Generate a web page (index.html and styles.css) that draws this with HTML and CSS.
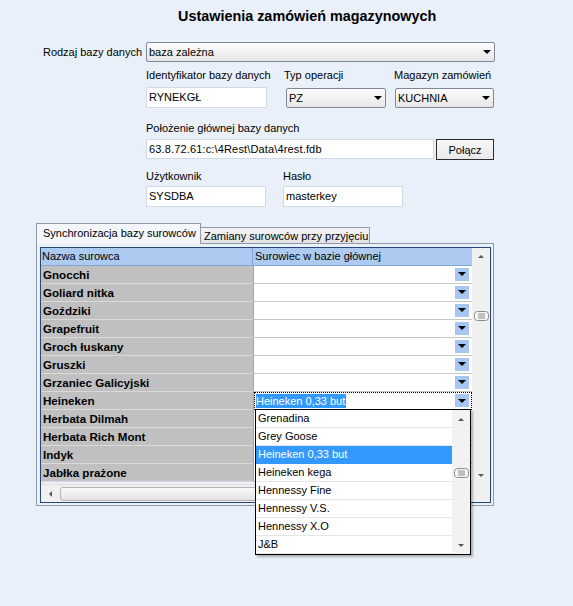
FILE: index.html
```html
<!DOCTYPE html>
<html lang="pl">
<head>
<meta charset="utf-8">
<title>Ustawienia zamówień magazynowych</title>
<link rel="stylesheet" href="styles.css">
</head>
<body>
<main class="page">
  <h1 class="title">Ustawienia zamówień magazynowych</h1>

  <div class="db-row">
    <span class="side-label">Rodzaj bazy danych</span>
    <div class="combo combo-db"><span class="combo-text">baza zależna</span><span class="combo-arrow"></span></div>
  </div>

  <div class="form">
    <div class="form-row row-ident">
      <div class="field f-ident"><label>Identyfikator bazy danych</label><div class="edit edit-short">RYNEKGŁ</div></div>
      <div class="field f-typ"><label>Typ operacji</label><div class="combo combo-typ"><span class="combo-text">PZ</span><span class="combo-arrow"></span></div></div>
      <div class="field f-mag"><label>Magazyn zamówień</label><div class="combo combo-mag"><span class="combo-text">KUCHNIA</span><span class="combo-arrow"></span></div></div>
    </div>
    <div class="form-row row-path">
      <div class="field f-path"><label>Położenie głównej bazy danych</label>
        <div class="path-line"><div class="edit edit-path">63.8.72.61:c:\4Rest\Data\4rest.fdb</div><button class="btn" type="button">Połącz</button></div>
      </div>
    </div>
    <div class="form-row row-user">
      <div class="field f-user"><label>Użytkownik</label><div class="edit edit-user">SYSDBA</div></div>
      <div class="field f-pass"><label>Hasło</label><div class="edit edit-user">masterkey</div></div>
    </div>
  </div>

  <section class="tabs">
    <div class="tab-strip">
      <div class="tab tab-active">Synchronizacja bazy surowców</div>
      <div class="tab tab-inactive">Zamiany surowców przy przyjęciu</div>
    </div>
    <div class="tab-panel">
      <div class="grid">
        <div class="table">
          <div class="thead"><div class="th th-name">Nazwa surowca</div><div class="th th-main">Surowiec w bazie głównej</div></div>
          <div class="tr"><div class="td name">Gnocchi</div><div class="td val"><span class="cell-btn"></span></div></div>
          <div class="tr"><div class="td name">Goliard nitka</div><div class="td val"><span class="cell-btn"></span></div></div>
          <div class="tr"><div class="td name">Goździki</div><div class="td val"><span class="cell-btn"></span></div></div>
          <div class="tr"><div class="td name">Grapefruit</div><div class="td val"><span class="cell-btn"></span></div></div>
          <div class="tr"><div class="td name">Groch łuskany</div><div class="td val"><span class="cell-btn"></span></div></div>
          <div class="tr"><div class="td name">Gruszki</div><div class="td val"><span class="cell-btn"></span></div></div>
          <div class="tr"><div class="td name">Grzaniec Galicyjski</div><div class="td val"><span class="cell-btn"></span></div></div>
          <div class="tr"><div class="td name">Heineken</div><div class="td val val-edit"><span class="sel-text">Heineken 0,33 but</span><span class="cell-btn"></span></div></div>
          <div class="tr"><div class="td name">Herbata Dilmah</div><div class="td val"></div></div>
          <div class="tr"><div class="td name">Herbata Rich Mont</div><div class="td val"></div></div>
          <div class="tr"><div class="td name">Indyk</div><div class="td val"></div></div>
          <div class="tr"><div class="td name">Jabłka prażone</div><div class="td val"></div></div>
        </div>
        <div class="vscroll">
          <div class="sb-btn"><span class="arr-up"></span></div>
          <div class="grip-wrap grip-main"><svg class="grip" width="15" height="10" viewBox="0 0 15 10"><rect x="0.5" y="0.5" width="14" height="9" rx="3" fill="#F6F6F6" stroke="#8C8C8C"/><line x1="4" y1="3" x2="11" y2="3" stroke="#8C8C8C"/><line x1="4" y1="5" x2="11" y2="5" stroke="#8C8C8C"/><line x1="4" y1="7" x2="11" y2="7" stroke="#8C8C8C"/></svg></div>
          <div class="sb-btn sb-bottom"><span class="arr-down"></span></div>
        </div>
        <div class="hscroll">
          <div class="sb-btn-h"><span class="arr-left"></span></div>
          <div class="hthumb"></div>
        </div>
        <div class="corner"></div>

        <div class="dropdown">
          <ul class="dd-list">
            <li>Grenadina</li>
            <li>Grey Goose</li>
            <li class="dd-sel">Heineken 0,33 but</li>
            <li>Heineken kega</li>
            <li>Hennessy Fine</li>
            <li>Hennessy V.S.</li>
            <li>Hennessy X.O</li>
            <li>J&amp;B</li>
          </ul>
          <div class="dd-scroll">
            <div class="sb-btn"><span class="arr-up"></span></div>
            <div class="grip-wrap grip-dd"><svg class="grip" width="15" height="10" viewBox="0 0 15 10"><rect x="0.5" y="0.5" width="14" height="9" rx="3" fill="#F6F6F6" stroke="#8C8C8C"/><line x1="4" y1="3" x2="11" y2="3" stroke="#8C8C8C"/><line x1="4" y1="5" x2="11" y2="5" stroke="#8C8C8C"/><line x1="4" y1="7" x2="11" y2="7" stroke="#8C8C8C"/></svg></div>
            <div class="sb-btn sb-bottom"><span class="arr-down"></span></div>
          </div>
        </div>
      </div>
    </div>
  </section>
</main>
</body>
</html>
```

FILE: styles.css
```css
html, body {
  margin: 0;
  padding: 0;
}
body {
  background: #E9F0F9;
  font-family: "Liberation Sans", Arial, sans-serif;
  font-size: 11px;
  color: #000;
}
.page {
  position: relative;
  width: 573px;
  height: 606px;
  padding-top: 8px;
  box-sizing: border-box;
  overflow: hidden;
}
.title {
  margin: 0 0 0 178px;
  font-size: 14.4px;
  font-weight: bold;
  line-height: 17px;
  height: 17px;
  white-space: nowrap;
}

/* ---------- combos / edits ---------- */
.combo {
  display: flex;
  align-items: center;
  height: 20px;
  box-sizing: border-box;
  border: 1px solid #7D8899;
  border-radius: 2px;
  background: linear-gradient(#FDFDFD, #E6E6E6);
  padding-left: 2px;
}
.combo-text {
  line-height: 16px;
  white-space: nowrap;
}
.combo-arrow {
  margin-left: auto;
  margin-right: 3px;
  width: 0;
  height: 0;
  border-left: 4px solid transparent;
  border-right: 4px solid transparent;
  border-top: 4px solid #000;
}
.edit {
  height: 21px;
  box-sizing: border-box;
  background: #FFF;
  border: 1px solid #D2DAE6;
  padding-left: 2px;
  line-height: 19px;
  white-space: nowrap;
}

.db-row {
  display: flex;
  align-items: center;
  margin-top: 17px;
  height: 20px;
}
.side-label {
  width: 146px;
  box-sizing: border-box;
  padding-right: 4px;
  text-align: right;
  white-space: nowrap;
}
.combo-db {
  width: 349px;
}

.form {
  margin-left: 146px;
}
.form-row {
  display: flex;
}
.field label {
  display: block;
  height: 14px;
  line-height: 14px;
  white-space: nowrap;
}
.row-ident {
  margin-top: 6px;
}
.f-ident {
  width: 120px;
}
.f-ident .edit {
  margin-top: 5px;
}
.edit-short {
  width: 121px;
}
.f-typ {
  width: 102px;
  margin-left: 18px;
}
.combo-typ {
  width: 100px;
  margin-left: 2px;
  margin-top: 6px;
}
.f-mag {
  margin-left: 8px;
}
.combo-mag {
  width: 99px;
  margin-left: 1px;
  margin-top: 6px;
}
.row-path {
  margin-top: 13px;
}
.path-line {
  display: flex;
  margin-top: 4px;
}
.edit-path {
  width: 288px;
  height: 20px;
  line-height: 18px;
  letter-spacing: 0.15px;
}
.btn {
  margin: 0 0 0 2px;
  width: 58px;
  height: 21px;
  box-sizing: border-box;
  border: 1px solid #2D2D2D;
  border-radius: 0;
  background: linear-gradient(#F7F7F7, #E9E9E9);
  font-family: inherit;
  font-size: 11px;
  color: #000;
  padding: 0;
}
.row-user {
  margin-top: 9px;
}
.row-user .edit {
  margin-top: 3px;
}
.f-user {
  width: 120px;
}
.edit-user {
  width: 120px;
}
.f-pass {
  margin-left: 17px;
}

/* ---------- tabs ---------- */
.tabs {
  margin-top: 16px;
  margin-left: 36px;
}
.tab-strip {
  display: flex;
  align-items: flex-end;
  height: 20px;
  position: relative;
  z-index: 2;
}
.tab {
  box-sizing: border-box;
  border: 1px solid #8F9AAA;
  border-bottom: none;
  white-space: nowrap;
}
.tab-active {
  width: 165px;
  height: 21px;
  margin-bottom: -1px;
  background: #F3F6FA;
  padding-left: 6px;
  line-height: 19px;
}
.tab-inactive {
  width: 169px;
  height: 16px;
  background: linear-gradient(#F4F4F4, #E4E4E4);
  border-left: none;
  padding-left: 3px;
  line-height: 16px;
}
.tab-panel {
  width: 458px;
  height: 263px;
  box-sizing: border-box;
  border: 1px solid #8F9AAA;
  padding: 3px 2px 2px 3px;
  background: #E9F0F9;
}

/* ---------- grid ---------- */
.grid {
  position: relative;
  width: 451px;
  height: 256px;
  box-sizing: border-box;
  border: 1px solid #264778;
  display: grid;
  grid-template-columns: 431px 18px;
  grid-template-rows: 236px 18px;
  background: #F0F0F0;
}
.table {
  overflow: hidden;
  background: #E9F0F9;
}
.thead {
  display: flex;
  height: 18px;
  box-sizing: border-box;
  background: #ADCBF1;
  border-bottom: 1px solid #86A6D2;
}
.th {
  line-height: 17px;
  white-space: nowrap;
}
.th-name {
  width: 213px;
  box-sizing: border-box;
  border-right: 1px solid #86A6D2;
  padding-left: 1px;
}
.th-main {
  width: 218px;
  padding-left: 2px;
}
.tr {
  display: flex;
  height: 18px;
}
.td {
  height: 18px;
  box-sizing: border-box;
  white-space: nowrap;
}
.name {
  width: 213px;
  background: #C0C0C0;
  border-right: 1px solid #A4A4A4;
  border-bottom: 1px solid #D9D9D9;
  padding-left: 2px;
  font-weight: bold;
  font-size: 11.6px;
  line-height: 18px;
}
.val {
  width: 218px;
  background: #FFF;
  border-bottom: 1px solid #C6C6C6;
  display: flex;
  align-items: center;
  justify-content: flex-end;
  padding-right: 3px;
}
.cell-btn {
  width: 14px;
  height: 13px;
  background: #A7C6F2;
  display: flex;
  align-items: center;
  justify-content: center;
  margin-bottom: 1px;
}
.cell-btn::before {
  content: "";
  width: 0;
  height: 0;
  border-left: 4px solid transparent;
  border-right: 4px solid transparent;
  border-top: 4px solid #000;
}
.val-edit {
  border: 1px dotted #000;
  padding-left: 1px;
  padding-right: 2px;
  justify-content: space-between;
}
.sel-text {
  background: #3399FF;
  color: #FFF;
  line-height: 14px;
  padding-right: 1px;
}

/* ---------- scrollbars ---------- */
.vscroll {
  display: flex;
  flex-direction: column;
  align-items: center;
  background: #F0F0F0;
}
.sb-btn {
  width: 100%;
  height: 16px;
  display: flex;
  align-items: center;
  justify-content: center;
}
.sb-bottom {
  margin-top: auto;
}
.vscroll .sb-bottom {
  margin-bottom: 1px;
}
.arr-up {
  width: 0;
  height: 0;
  border-left: 3px solid transparent;
  border-right: 3px solid transparent;
  border-bottom: 3px solid #555;
}
.arr-down {
  width: 0;
  height: 0;
  border-left: 3px solid transparent;
  border-right: 3px solid transparent;
  border-top: 3px solid #555;
}
.arr-left {
  width: 0;
  height: 0;
  border-top: 3px solid transparent;
  border-bottom: 3px solid transparent;
  border-right: 3px solid #555;
}
.grip-wrap {
  display: flex;
  justify-content: center;
}
.grip {
  display: block;
}
.grip-main {
  margin-top: 47px;
}
.hscroll {
  display: flex;
  align-items: center;
  background: #F0F0F0;
  border-top: 1px solid #E0E0E0;
}
.sb-btn-h {
  width: 18px;
  height: 100%;
  display: flex;
  align-items: center;
  justify-content: center;
}
.hthumb {
  margin-left: 1px;
  width: 360px;
  height: 14px;
  box-sizing: border-box;
  border: 1px solid #B4B4B4;
  border-radius: 3px;
  background: linear-gradient(#F9F9F9, #E2E2E2);
}
.corner {
  background: #F0F0F0;
}

/* ---------- dropdown ---------- */
.dropdown {
  position: absolute;
  left: 214px;
  top: 161px;
  width: 216px;
  height: 146px;
  box-sizing: border-box;
  border: 1px solid #000;
  background: #FFF;
  box-shadow: 2px 2px 2px rgba(0, 0, 0, 0.28);
  display: flex;
  z-index: 5;
}
.dd-list {
  list-style: none;
  margin: 0;
  padding: 0;
  width: 196px;
}
.dd-list li {
  height: 18px;
  box-sizing: border-box;
  border-bottom: 1px solid #E6E6E6;
  padding-left: 2px;
  line-height: 17px;
  white-space: nowrap;
}
.dd-list li.dd-sel {
  background: #3399FF;
  color: #FFF;
  border-bottom-color: #3399FF;
}
.dd-scroll {
  width: 18px;
  background: #F2F2F2;
  display: flex;
  flex-direction: column;
}
.dd-scroll .sb-btn {
  height: 18px;
}
.grip-dd {
  margin-top: 40px;
}
```
